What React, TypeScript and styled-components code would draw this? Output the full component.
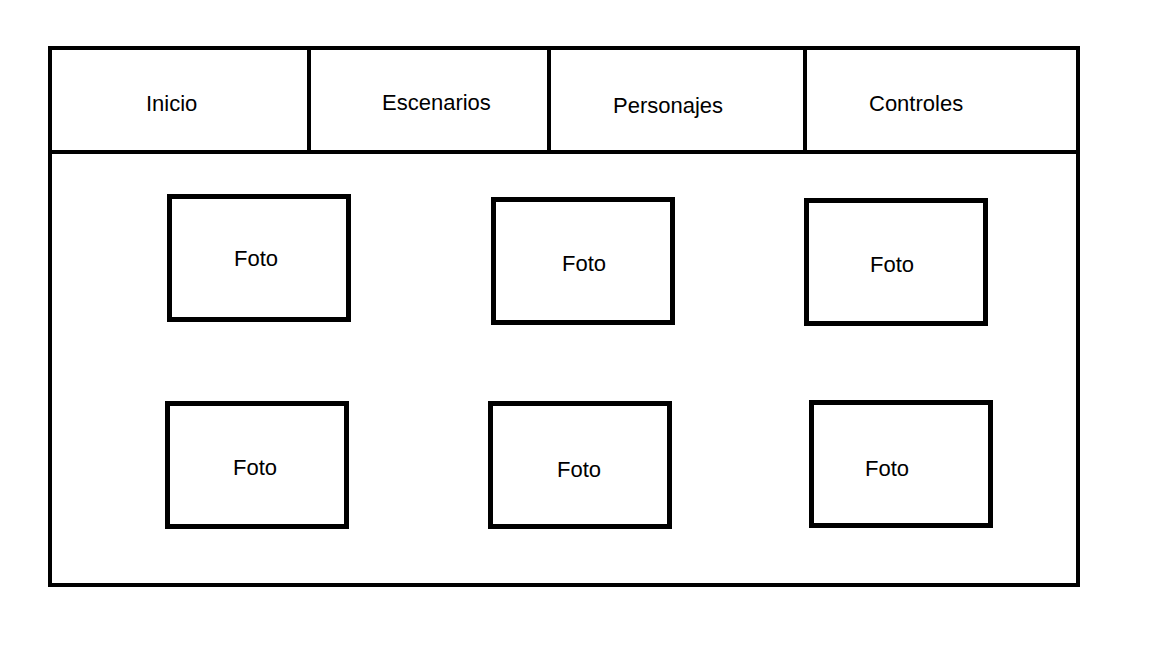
import React from 'react';
import styled, { createGlobalStyle } from 'styled-components';

const tabs = [
  { label: 'Inicio', width: 259, padLeft: 94, padTop: 41 },
  { label: 'Escenarios', width: 240, padLeft: 71, padTop: 40 },
  { label: 'Personajes', width: 256, padLeft: 62, padTop: 43 },
  { label: 'Controles', width: 269, padLeft: 62, padTop: 41 },
];

const photos = [
  { dx: 2, dy: 0, tx: -3, ty: 1 },
  { dx: 3, dy: 3, tx: 1, ty: 3 },
  { dx: 0, dy: 4, tx: -4, ty: 3 },
  { dx: 0, dy: 1, tx: -2, ty: 3 },
  { dx: 0, dy: 1, tx: -1, ty: 5 },
  { dx: 5, dy: 0, tx: -14, ty: 5 },
];

const App = () => {
  return (
    <>
      <GlobalStyle />
      <Page>
        <Frame>
          <Nav>
            {tabs.map((tab, i) => (
              <Tab
                key={tab.label}
                $width={tab.width}
                $padLeft={tab.padLeft}
                $padTop={tab.padTop}
                $last={i === tabs.length - 1}
              >
                {tab.label}
              </Tab>
            ))}
          </Nav>
          <Gallery>
            {photos.map((p, i) => (
              <Photo key={i} $dx={p.dx} $dy={p.dy}>
                <PhotoLabel $tx={p.tx} $ty={p.ty}>
                  Foto
                </PhotoLabel>
              </Photo>
            ))}
          </Gallery>
        </Frame>
      </Page>
    </>
  );
};

export default App;

const GlobalStyle = createGlobalStyle`
  html, body {
    margin: 0;
    padding: 0;
    background: #fff;
  }
  body {
    font-family: "Liberation Sans", Arial, sans-serif;
    color: #000;
  }
`;

const Page = styled.div`
  width: 1152px;
  height: 648px;
  padding: 46px 0 0 48px;
  box-sizing: border-box;
  background: #fff;
`;

const Frame = styled.div`
  width: 1032px;
  height: 541px;
  box-sizing: border-box;
  border: 4px solid #000;
  display: flex;
  flex-direction: column;
`;

const Nav = styled.div`
  display: flex;
  height: 104px;
  box-sizing: border-box;
  border-bottom: 4px solid #000;
`;

const Tab = styled.div<{ $width: number; $padLeft: number; $padTop: number; $last: boolean }>`
  width: ${(p) => p.$width}px;
  box-sizing: border-box;
  border-right: ${(p) => (p.$last ? 'none' : '4px solid #000')};
  padding: ${(p) => p.$padTop}px 0 0 ${(p) => p.$padLeft}px;
  font-size: 22px;
  line-height: normal;
  white-space: nowrap;
`;

const Gallery = styled.div`
  flex: 1;
  display: grid;
  grid-template-columns: 323px 316px 184px;
  grid-template-rows: 206px 128px;
  padding: 40px 0 0 113px;
  box-sizing: border-box;
`;

const Photo = styled.div<{ $dx: number; $dy: number }>`
  width: 184px;
  height: 128px;
  box-sizing: border-box;
  border: 5px solid #000;
  margin: ${(p) => p.$dy}px 0 0 ${(p) => p.$dx}px;
  display: flex;
  align-items: center;
  justify-content: center;
`;

const PhotoLabel = styled.span<{ $tx: number; $ty: number }>`
  font-size: 22px;
  margin: ${(p) => p.$ty * 2}px 0 0 ${(p) => p.$tx * 2}px;
`;
